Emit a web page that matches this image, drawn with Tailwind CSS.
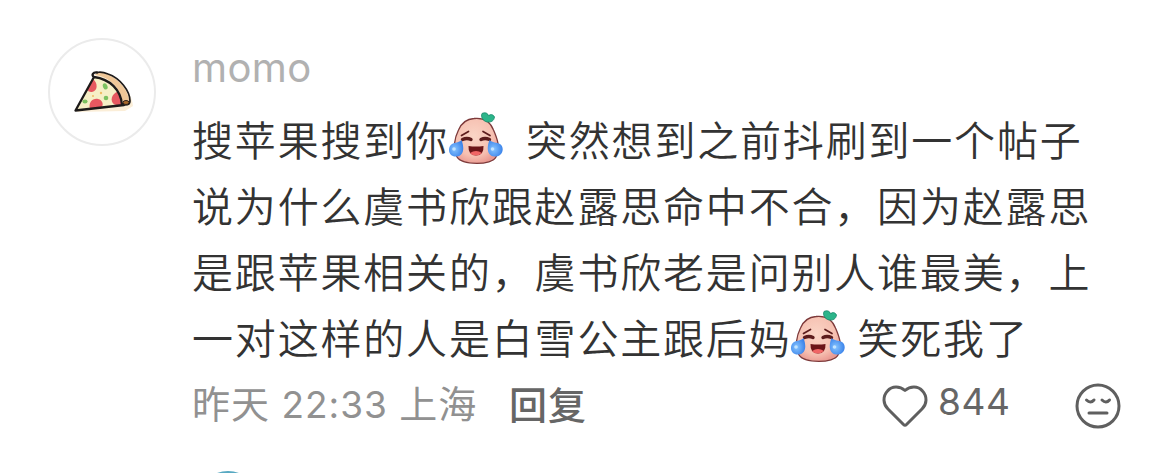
<!DOCTYPE html>
<html lang="zh-CN">
<head>
    <meta charset="UTF-8">
    <meta name="viewport" content="width=device-width, initial-scale=1.0">
    <title>评论</title>
    <script src="https://cdn.jsdelivr.net/npm/@tailwindcss/browser@4"></script>
</head>
<body class="bg-white h-[473px] overflow-hidden font-['Inter','Noto_Sans_CJK_SC',sans-serif]">
    <!-- Эмодзи «персик, смех до слёз» -->
    <svg class="absolute w-0 h-0">
        <defs>
            <radialGradient id="skin" cx="45%" cy="40%" r="62%">
                <stop offset="0" stop-color="#fad5c6"/>
                <stop offset="0.7" stop-color="#f6c0b1"/>
                <stop offset="1" stop-color="#ea9a92"/>
            </radialGradient>
            <radialGradient id="tear" cx="40%" cy="55%" r="60%">
                <stop offset="0" stop-color="#86c4ff"/>
                <stop offset="1" stop-color="#3b83ea"/>
            </radialGradient>
            <symbol id="peach" viewBox="0 0 54 54">
                <path d="M25 6.500C34 5.500 41 9 44.500 18C48 26 52 36 47 45C43 53.500 13 53.500 8 45C3 37 6 25 9.500 18C12.500 11 17 7 25 6.500Z" fill="url(#skin)" stroke="#7d3a3b" stroke-width="1.3"/>
                <path d="M38 10C34 9 31.500 5 33 1.500C36 0 39 1 39.500 4C41 2 44 2 45.500 5C45 9 42 10.500 38 10Z" fill="#2cb58a" stroke="#15866a" stroke-width="0.8"/>
                <path d="M12.500 23.500L19.500 19.500M34 19.500L41 23.500" stroke="#5d1c1c" stroke-width="1.7" fill="none" stroke-linecap="round"/>
                <path d="M13.500 27.500Q18 25.500 22 27.500M32 27.500Q36 25.500 40.500 27.500" stroke="#5d1c1c" stroke-width="3.4" fill="none" stroke-linecap="round"/>
                <path d="M19.500 34Q27 35 34.500 34Q35 43.500 27 43.500Q19 43.500 19.500 34Z" fill="#6b1518"/>
                <path d="M21 41Q27 37 33 41Q30 43.500 27 43.500Q23 43.500 21 41Z" fill="#f06565"/>
                <path d="M12.500 28C15 34 16 44 7.500 44.500C-1 45-2 35 3 32C6 30 10 31 12.500 28Z" fill="url(#tear)"/>
                <path d="M40.500 28C38 34 37 44 45.500 44.500C54 45 56 35 51 32C48 30 43 31 40.500 28Z" fill="url(#tear)"/>
                <circle cx="5" cy="37" r="1.800" fill="#c3e4ff"/>
                <circle cx="43.500" cy="37" r="1.800" fill="#c3e4ff"/>
            </symbol>
        </defs>
    </svg>

    <div class="flex pl-12 pt-[38px]">
        <!-- Аватар -->
        <div class="w-[108px] h-[108px] shrink-0 rounded-full border-2 border-[#ebebeb] flex items-center justify-center">
            <svg class="w-[104px] h-[104px]" viewBox="50 40 104 104" fill="none">
                <path d="M77 112L97 74C113 75 131 87 133 106L125 111Z" fill="#fbeed8"/>
                <path d="M75.500 110.500L94 77C110 79 121 90 122 105Z" fill="#f6efc6"/>
                <path d="M93 79C98 83 98 91 92 92C89 92 87 91 88 88Z" fill="#e65860"/>
                <path d="M90 109C88 102 93 98 98 99C103 100 104 106 101 107Z" fill="#e65860"/>
                <path d="M121 105C112 107 109 99 114 94Q117 91 119 92Q122 98 121 105Z" fill="#e65860"/>
                <ellipse cx="105" cy="86.500" rx="2.200" ry="3.200" transform="rotate(-25 105 86)" fill="#7cc160"/>
                <circle cx="106" cy="98" r="2.300" fill="#7cc160"/>
                <ellipse cx="85" cy="101.500" rx="2.600" ry="2" fill="#7cc160"/>
                <circle cx="101" cy="93" r="1.200" fill="#efbd66"/>
                <circle cx="93" cy="96" r="1" fill="#efbd66"/>
                <path d="M94 75C108 76 121 87 123 104L129 103C130 91 117 75 100 72Z" fill="#efc798"/>
                <path d="M94 77C110 79 121 90 122 105M94 77L75.500 110.500L124 105M94 77C91 75 93 72 97 72.500" stroke="#1d1a19" stroke-width="2.300" stroke-linecap="round" stroke-linejoin="round"/>
                <path d="M97 72.500Q102 71.500 108 74C120 78 130 91 130 101Q130 105 125 105" stroke="#1d1a19" stroke-width="1.700" stroke-linecap="round"/>
                <ellipse cx="126" cy="102.500" rx="3" ry="2" fill="#a8682a" stroke="#30211a" stroke-width="1"/>
            </svg>
        </div>

        <div class="ml-[36px] w-[929px]">
            <div class="h-[67px] pt-[6px] text-[40px] leading-[48px] tracking-[0.4px] text-[#b1b1b1]">momo</div>

            <!-- Текст комментария -->
            <div class="text-[41px] leading-[66px] tracking-[1.82px] text-[#333333] whitespace-nowrap font-['Noto_Sans_CJK_SC',sans-serif] font-[350]">
                <div class="flex h-[66px]">
                    <span>搜苹果搜到你</span>
                    <svg class="w-[54px] h-[54px] mt-[7px] mr-[23px]"><use href="#peach"/></svg>
                    <span>突然想到之前抖刷到一个帖子</span>
                </div>
                <div class="h-[66px]">说为什么虞书欣跟赵露思命中不合，因为赵露思</div>
                <div class="h-[66px]">是跟苹果相关的，虞书欣老是问别人谁最美，上</div>
                <div class="flex h-[66px]">
                    <span>一对这样的人是白雪公主跟后妈</span>
                    <svg class="w-[54px] h-[54px] mt-[7px] mr-[12px]"><use href="#peach"/></svg>
                    <span>笑死我了</span>
                </div>
            </div>

            <!-- Дата и действия -->
            <div class="flex items-center h-[67px] pt-[4px] text-[37px] leading-[60px] whitespace-nowrap">
                <span class="w-[317px] text-[#919191] tracking-[1px]"><span class="text-[38px]">昨天</span> 22:33 <span class="text-[38px]">上海</span></span>
                <span class="text-[38px] font-medium text-[#666666] tracking-[1px]">回复</span>
                <svg class="ml-auto mt-[3px] w-[46px] h-[42px] shrink-0" viewBox="0 0 46 42" fill="none" stroke="#5f5f5f" stroke-width="3" stroke-linejoin="round">
                    <path d="M23 5.500C18 1 10 .5 5.500 6C.5 11.500 1 19 6 24L21.500 39.500Q23 41 24.500 39.500L40 24C45 19 45.500 11.500 40.500 6C36 .5 28 1 23 5.500Z"/>
                </svg>
                <span class="ml-[10px] -mt-[6px] w-[137px] text-[#666666] tracking-[0.6px]">844</span>
                <svg class="mt-[3px] w-[46px] h-[46px] shrink-0" viewBox="0 0 46 46" fill="none" stroke="#5f5f5f" stroke-width="3" stroke-linecap="round">
                    <circle cx="23" cy="23" r="21"/>
                    <path d="M11.500 17Q15.500 21 19 17M27 17Q31 21 34.500 17M14 30H32"/>
                </svg>
            </div>

            <!-- Верхний край следующего аватара -->
            <div class="mt-[35px] ml-[5px] h-[2px] overflow-hidden">
                <div class="w-[62px] h-[62px] rounded-full bg-[#58a9c2]"></div>
            </div>
        </div>
    </div>
</body>
</html>
